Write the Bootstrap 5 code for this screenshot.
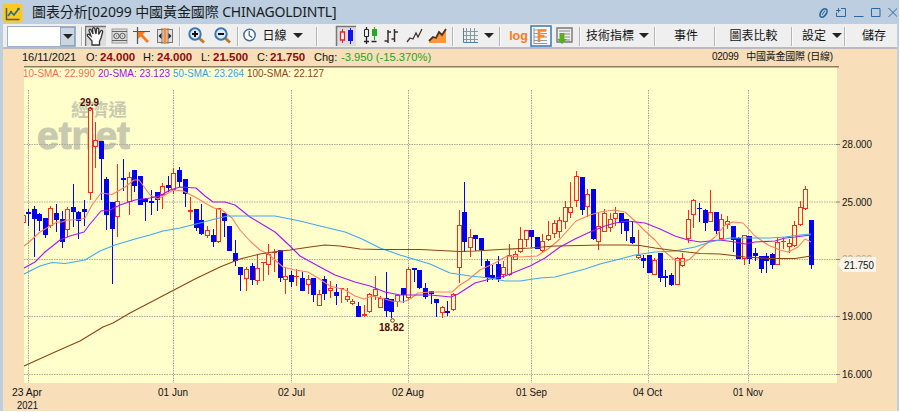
<!DOCTYPE html>
<html lang="zh-Hant">
<head>
<meta charset="utf-8">
<meta name="viewport" content="width=device-width, initial-scale=1">
<title>圖表分析</title>
<link href="https://cdn.jsdelivr.net/npm/bootstrap@5.3.0/dist/css/bootstrap.min.css" rel="stylesheet">
<style>
body{background:#fff;overflow:hidden;font-family:"Liberation Sans","Noto Sans CJK TC",sans-serif;color:#111;line-height:1}
.win{width:899px;height:411px;background:#bccedf;padding:0 2px 0 3px}
.titlebar{height:24px}
.titlebar h1{font:14px/28px "Noto Sans","Noto Sans CJK TC",sans-serif;letter-spacing:-.1px;color:#181c22;margin-left:9px}
.titlebar h1 span{letter-spacing:-.2px}
.tools{height:25px;background:#efefef;border-bottom:2px solid #b9bbbd;display:grid;padding-left:4px;
 grid-template-columns:72px 5px 23px 24px 21px 25px 6px 27px 24px 7px 17px 33px 14px 24px 34px 15px 26px 21px 26px 4px 30px 8px 14px 23px 22px 25px 5px 56px 12px 9px 54px 3px 75px 2px 42px 3px 14px 44px}
.tools>*{display:flex;align-items:center;justify-content:center;white-space:nowrap;font-size:12px;min-width:0}
.tools svg,.tools .tri{flex:none}
.tools>.vsep{width:2px;height:19px;margin:3px auto 0;background:#b5b5b5;border-right:1px solid #fafafa}
.combo{height:21px;width:69px;margin-top:1px;border:1px solid #9cb3c7;background:#fff}
.combo i{width:15px;background:#cad7e2;border:1px solid #8fa9c0}
.tri{width:0;height:0;border:5px solid transparent;border-top-color:#222;border-bottom:0}
.logtxt{font:bold 12.5px "Liberation Sans",sans-serif;color:#ff7a1a}
.info{height:17px;background:#f8dfb9;display:grid;font-size:11px;line-height:17px;padding-left:19px;white-space:nowrap;
 grid-template-columns:64px 14px 43px 14px 44px 12px 44px 13px 44px 27px 371px 1fr}
.info b{font-size:11.5px;color:#8d0b08}
.info .neg{color:#1fa51f;font-size:11.2px}
.info .sym{font-size:10px;line-height:15px;letter-spacing:-.25px}
svg{display:block}
.plot{background:#f8dfb9}
</style>
<script src="https://cdn.jsdelivr.net/npm/bootstrap@5.3.0/dist/js/bootstrap.bundle.min.js"></script>
</head>
<body>
<main class="win d-flex flex-column">
<header class="titlebar d-flex align-items-center justify-content-between">
 <div class="d-flex align-items-center">
  <svg width="20" height="20" viewBox="0 0 20 20" class="mt-1"><rect x="0" y="0" width="19.5" height="18.5" rx="3" fill="#ffc91f"/><path d="M3.5 4v11.500h13" fill="none" stroke="#46606c" stroke-width="1.500"/><path d="M5 12l3-4 3 3 4.500-6" fill="none" stroke="#28708a" stroke-width="1.700"/><circle cx="8" cy="8" r="1.200" fill="#28708a"/><circle cx="15.500" cy="5" r="1.300" fill="#28708a"/></svg>
  <h1 class="mb-0">圖表分析[02099 中國黃金國際 <span>CHINAGOLDINTL]</span></h1>
 </div>
 <svg width="82" height="16" viewBox="811 4 82 16" fill="none" stroke="#2e679b" stroke-width="1"><ellipse cx="819.500" cy="13" rx="2.800" ry="4.700" transform="rotate(35 819.500 13)" stroke-width="1.700"/><path d="M818 15l3-4.500M837 8.500h4.500v8h-9v-4M832 10.500h4.500M834.500 8v4.500M850 16.500h9.500M867.500 8.500h8.500v8h-8.500zM884.500 8l9 9M893.500 8l-9 9"/></svg>
</header>
<nav class="tools">
 <div class="justify-content-start"><div class="combo d-flex justify-content-end"><i class="d-flex align-items-center justify-content-center"><span class="tri"></span></i></div></div>
 <div class="vsep"></div>
 <div><svg width="22" height="22" viewBox="0 0 22 22"><path fill="#ddd" d="M0 1h21v20H0z"/><path d="M.5 21V1.500H21" fill="none" stroke="#777" stroke-width="1.500"/><path d="M7 20v-4L2.500 11c-.8-2 1.200-2.200 2-1.200L6 11 4 5.500c.2-1.800 1.800-1.500 2.300 0L8 9 7.500 4c.5-1.800 2-1.600 2.400 0L11 9l.6-5c.7-1.700 2.200-1 2.200.5L13.700 9.500l2-3.500c1-1.300 2.300-.5 1.900 1L16 13l-1.500 3.500V20z" fill="#fff" stroke="#333" stroke-width="1.300"/></svg></div>
 <div><svg width="17" height="18" viewBox="0 0 17 18" fill="none" stroke="#555"><rect x="1" y="2" width="15" height="14" fill="#ddd" stroke="#999"/><circle cx="5.500" cy="9" r="2.700"/><circle cx="11.500" cy="9" r="2.700"/><path d="M1 4.500h15M1 13.500h15M5 9h1M11 9h1" stroke-width=".9"/></svg></div>
 <div><svg width="18" height="18" viewBox="0 0 18 18"><path d="M0 4.500h17M4.500 0v17" stroke="#555" stroke-width="1.200"/><path d="M5 5h7l-2.300 2.400L16 14l-2 2-6.300-6.500L5 12z" fill="#ff7a1c"/></svg></div>
 <div><svg width="18" height="18" viewBox="0 0 18 18"><rect x="1.500" y="2.500" width="15" height="13" fill="#e2e2e2" stroke="#777"/><path d="M6 1v16M12 1v16" stroke="#777"/><path d="M7.500 1h3v16h-3z" fill="#ff8a32"/><path d="M5.500 6v6l-3-3zM12.500 6v6l3-3z" fill="#222"/></svg></div>
 <div class="vsep"></div>
 <div><svg width="19" height="19" viewBox="0 0 19 19"><path d="M12 12l5 4.500" stroke="#c47b23" stroke-width="3"/><circle cx="8" cy="8" r="5.700" fill="#dcebfa" stroke="#3977b3" stroke-width="2"/><path d="M5 8h6M8 5v6" stroke="#111" stroke-width="2"/></svg></div>
 <div><svg width="19" height="19" viewBox="0 0 19 19"><path d="M12 12l5 4.500" stroke="#c47b23" stroke-width="3"/><circle cx="8" cy="8" r="5.700" fill="#dcebfa" stroke="#3977b3" stroke-width="2"/><path d="M5 8h6" stroke="#111" stroke-width="2"/></svg></div>
 <div class="vsep"></div>
 <div><svg width="15" height="17" viewBox="0 0 15 17"><circle cx="7.500" cy="8" r="5.700" fill="#fff" stroke="#476b94" stroke-width="1.500"/><path d="M7.200 4v4.500l3 2" fill="none" stroke="#34587e" stroke-width="1.200"/></svg></div>
 <div>日線</div>
 <div><span class="tri"></span></div>
 <div class="vsep ms-auto"></div>
 <div><svg width="22" height="22" viewBox="0 0 22 22"><path fill="#ddd" d="M1 1h20v20H1z"/><path d="M1.500 21V1.500H21" fill="none" stroke="#777" stroke-width="1.500"/><path d="M7.500 4v14" stroke="#e8202a"/><path d="M5.500 7h4v8h-4z" fill="#fff" stroke="#e8202a" stroke-width="1.300"/><path d="M15.500 3v16" stroke="#11d"/><path d="M13 5h5v11h-5z" fill="#11e"/></svg></div>
 <div><svg width="18" height="19" viewBox="0 0 18 19"><path d="M4.500 1v17M2 15.500h5M9.500 15.500h5" stroke="#222" stroke-width="1.300"/><path d="M2.500 3.500h4v7h-4z" fill="#efefef" stroke="#222"/><path d="M12.500 1v13" stroke="#2a2"/><path d="M10 3h5v7h-5z" fill="#2a2"/></svg></div>
 <div><svg width="16" height="18" viewBox="0 0 16 18" fill="none" stroke="#3c302b" stroke-width="1.500"><path d="M5 3v13M1.500 14H5M5 5h3M11.500 2v13M8.500 12h3M11.500 5H15"/></svg></div>
 <div><svg width="18" height="18" viewBox="0 0 18 18"><path d="M1 15l3-4 3 1 3-6 2 4 4-8" fill="none" stroke="#43342e" stroke-width="1.300"/></svg></div>
 <div><svg width="20" height="18" viewBox="0 0 20 18"><path d="M1 15l4-5 3 2 3-7 3 4 4-7v14H1z" fill="#ff9738"/><path d="M1 14l4-4 3 1 3-6 3 3 4-6" fill="none" stroke="#51301e" stroke-width="1.800"/></svg></div>
 <div class="vsep"></div>
 <div><svg width="17" height="17" viewBox="0 0 17 17" fill="none"><path d="M4.500 1v14M8.500 1v14M12.500 1v14M1 4.500h15M1 8.500h15M1 12.500h15" stroke="#8798a5"/><path d="M1.500 1v14.500H16" stroke="#557e9e"/></svg></div>
 <div><span class="tri"></span></div>
 <div class="vsep"></div>
 <div class="logtxt">log</div>
 <div><svg width="22" height="22" viewBox="0 0 22 22"><path fill="#f8f8f8" stroke="#3b78b0" stroke-width="1.500" d="M1 1h20v20H1z"/><path d="M4 3v16M4 5h13M4 8.500h13M4 12h13M4 15.500h13M4 18.500h13" stroke="#8d9aa5"/><path d="M9 17V5.500h7M9 11h5.500" fill="none" stroke="#ff8429" stroke-width="2.500"/></svg></div>
 <div><svg width="19" height="19" viewBox="0 0 19 19"><path fill="#eee" stroke="#777" stroke-width="1.400" d="M2 2h15v14H2z"/><path d="M4 5h11M8 8h7M10 11h5M11 14h4" stroke="#888"/><path d="M4.500 7h5v6H12l-5 5-5-5h2.500z" fill="#58ad22"/></svg></div>
 <div class="vsep"></div>
 <div>技術指標</div><div><span class="tri"></span></div>
 <div class="vsep"></div><div>事件</div><div class="vsep"></div><div>圖表比較</div><div class="vsep"></div><div>設定</div><div><span class="tri"></span></div><div class="vsep ms-auto"></div><div>儲存</div>
</nav>
<section class="info"><span>16/11/2021</span><span>O:</span><b>24.000</b><span>H:</span><b>24.000</b><span>L:</span><b>21.500</b><span>C:</span><b>21.750</b><span>Chg:</span><span class="neg">-3.950 (-15.370%)</span><span class="sym">02099 &nbsp; 中國黃金國際 (日線)</span></section>
<svg class="plot" id="chart" width="894" height="345" viewBox="3 66 894 345" font-family="Liberation Sans, Noto Sans CJK TC, sans-serif"></svg>
</main>
<script>
// Each bar: up (1) or down (0), high, low, body top, body bottom
const bars = [
[0,209,226,212,214],[0,206,257,209,219],[0,213,231,214,221],[0,218,238,218,235],[1,206,228,208,226],[0,204,232,213,220],[0,211,248,219,242],[1,207,237,209,230],[0,184,227,207,212],[0,211,239,212,221],
[0,200,226,209,212],[1,107,200,108,193],[1,122,168,140,147],[0,141,200,141,159],[0,177,230,179,215],[0,202,284,202,229],[1,164,237,201,217],[0,159,191,178,180],[1,172,215,177,202],[0,170,192,170,186],
[0,176,205,176,205],[0,198,221,199,202],[0,190,215,201,203],[0,192,211,192,200],[1,183,209,186,195],[0,176,192,185,188],[1,168,194,173,190],[0,167,187,170,182],[0,179,207,179,194],[1,197,220,210,212],
[0,209,231,209,228],[0,204,235,220,234],[1,226,238,230,236],[0,229,247,235,242],[1,208,243,208,242],[0,213,237,213,221],[0,226,251,226,251],[0,240,266,253,261],[0,267,291,267,275],[1,267,291,269,279],
[0,263,285,266,280],[1,255,285,268,281],[1,262,281,262,262],[1,244,275,254,265],[1,249,272,252,252],[0,250,282,250,278],[1,267,294,276,280],[0,271,287,275,282],[1,269,286,276,276],[0,272,291,278,291],
[1,275,294,279,285],[0,278,302,278,295],[1,290,306,294,306],[0,276,300,279,294],[1,281,298,288,291],[0,284,305,292,296],[1,288,303,288,288],[1,288,302,296,300],[1,299,305,301,304],[0,302,317,306,317],
[1,305,317,314,316],[1,293,313,294,312],[1,276,300,289,296],[1,296,308,298,308],[0,272,317,298,311],[0,299,318,299,312],[1,295,307,295,302],[0,288,303,288,295],[1,267,299,269,298],[0,268,282,268,270],
[0,270,289,270,288],[0,283,299,288,297],[0,291,304,291,294],[0,299,317,299,303],[1,306,318,307,313],[0,301,316,311,313],[1,293,311,294,310],[1,210,283,225,268],[0,182,252,212,242],[1,229,257,237,248],
[0,235,251,235,239],[0,238,266,238,250],[0,259,282,261,278],[0,265,280,275,278],[0,256,282,264,279],[1,261,278,267,275],[1,244,276,255,275],[1,251,260,254,260],[1,227,253,239,252],[1,230,247,230,240],
[0,230,247,230,237],[0,237,249,237,249],[1,234,252,241,251],[1,221,241,235,240],[1,220,238,223,234],[1,217,238,220,232],[1,201,229,207,222],[1,182,218,207,213],[1,171,207,176,201],[0,177,215,177,210],
[1,189,217,194,207],[0,189,240,189,239],[1,212,250,226,242],[1,209,232,213,232],[1,213,232,219,228],[1,207,226,213,219],[0,213,234,213,223],[0,219,241,219,231],[0,221,244,237,243],[1,230,259,255,258],
[0,255,268,258,261],[0,255,273,255,273],[1,258,275,260,275],[0,253,282,253,278],[0,270,287,276,278],[0,273,286,275,285],[1,257,285,258,285],[1,253,267,258,266],[1,210,243,219,239],[1,199,228,200,215],
[0,203,222,208,209],[0,209,231,210,223],[1,190,222,212,222],[0,212,234,212,231],[1,214,240,219,239],[1,216,229,221,225],[0,226,252,226,240],[0,237,259,238,259],[1,235,265,235,259],[0,236,264,236,259],
[0,248,261,253,256],[0,256,273,256,269],[0,253,273,256,261],[0,253,269,254,265],[1,238,265,242,265],[1,237,249,241,241],[1,239,253,243,247],[1,221,247,225,246],[1,201,226,207,225],[1,186,210,189,209],[0,220,269,220,265]];
const averages = [
['#ff8163','24,246 28,243 40,232 57,222 62,222 67,220 80,219.5 85,218 92,205 101,193 112,194.5 125,187 134,180 139,180 145,188 150,195 158,199 165,195 173,190 183,191 195,197 205,203 214,208 222,210 232,218 240,230 250,241 260,250 268,254 275,260 283,267 295,270 308,272 318,278 330,286 345,290 355,296 364,299 372,296 385,299 392,301 403,302 410,299 418,293 430,292 452,292 460,285 468,280 480,270 495,263 507,256 520,257 537,256 548,249 560,239 568,230 576,221 590,215 600,212 614,210 625,212 635,221 645,231 655,240 665,252 675,260 684,262 690,259 700,249 715,237 725,225 733,222 743,223 755,236 768,245 780,250 788,252 798,247 805,239 811,242'],
['#a416f0','24,268 35,262 45,252 60,240 70,236 84,232 90,224 101,211 110,210 120,205 135,200 150,198 160,196 170,190 180,187 196,188 205,196 213,202 225,202 235,205 250,217 265,226 275,232 290,246 300,256 320,267 335,275 355,282 370,286 385,292 400,295 430,295 441,296 451,297 458,294 475,283 490,279 505,276 515,272 530,266 545,258 560,247 575,239 590,232 605,226 615,223 627,221 645,223 660,229 675,236 688,240 700,242 720,240 735,242 745,244 755,242 775,241 785,238 795,237 811,235'],
['#45a5f2','24,274 40,266 52,262.5 65,263.5 85,260 100,251 115,245 135,239 150,235 163,231 180,228 200,223 215,219 228,216 275,216 290,219 300,221 320,226 345,232 362,239 380,248 400,255 420,261 430,264 450,273 470,276 490,278 505,281 520,281 540,278 555,277 570,273 585,269 600,264 620,259 635,255 655,252 675,251 695,247 710,242 730,238 770,238 785,237 800,235 811,234'],
['#8b4513','24,366 55,352 80,341 103,327 113,323 130,313 174,290 195,279 220,267 240,259 260,254 280,251 290,250 310,247 325,245 340,246 360,249 380,249.5 420,249.5 440,250.5 460,251.5 475,251 500,249.5 530,248 555,246 580,245.5 600,245 625,245 640,245.5 655,248 670,250 700,253.5 720,254 745,257 770,258.5 795,258.5 811,256']];
const label = (x,y,s,w,fill='#111',extra='') => `<text x="${x}" y="${y}" font-size="10.5" fill="${fill}" textLength="${w}" lengthAdjust="spacingAndGlyphs" ${extra}>${s}</text>`;
let out = '<path fill="#ffffcc" d="M24 67h813v316H24z"/><path d="M24 66.700h815" stroke="#8c7b5f" stroke-width="1.600"/>';
out += label(71,116,'經濟通',56,'#c9c9b0','style="font-size:17px;font-weight:700"');
out += label(37,149,'etnet',93,'#c9c9b0','style="font-size:38px;font-weight:700" stroke="#c9c9b0" stroke-width="1"');
const months = [[28.5,'23 Apr',12,30],[173.5,'01 Jun',158,30],[291.5,'02 Jul',278,27],[408.5,'02 Aug',392,32],[531.5,'01 Sep',516,31],[648.5,'04 Oct',633,29],[748.5,'01 Nov',733,30]];
months.forEach(([x,t,tx,w]) => { out += `<path d="M${x} 90V383" stroke="#a3a39c" stroke-dasharray="1.500 1"/>` + label(tx,396,t,w); });
out += label(17,409,'2021',21);
[[144.5,'28.000'],[202,'25.000'],[259.5,'22.000'],[316.5,'19.000'],[374.5,'16.000']].forEach(([y,t]) => {
  out += `<path d="M24 ${y}H837" stroke="#aaaaa0" stroke-dasharray="1.500 1"/><path d="M836 ${y}h4" stroke="#888"/>` + label(842,y+3.5,t,30,t==='22.000'?'#b5aa9a':'#111');
});
out += '<path d="M24 215.500h1.500v7H24" fill="none" stroke="#ff2a1c"/>';
bars.forEach(([up,h,l,t,b],i) => {
  const x = Math.round(28 + i*5.592) + .5;
  const c = up ? '#ff2a1c' : '#0000f0';
  if (up) {
    out += `<rect x="${x-.5}" y="${h}" width="1" height="${l-h}" fill="${c}"/>`;
    out += b-t<1 ? `<rect x="${x-2.5}" y="${t}" width="5" height="1" fill="${c}"/>` : `<rect x="${x-2}" y="${t+.5}" width="4" height="${Math.max(b-t-1,1)}" fill="#ffffcc" stroke="${c}"/>`;
  } else out += `<rect x="${x-.5}" y="${h}" width="1" height="${l-h}" fill="${c}"/><rect x="${x-2.5}" y="${t}" width="5" height="${b-t}" fill="${c}"/>`;
});
averages.forEach(([c,p]) => out += `<polyline points="${p}" fill="none" stroke="${c}" stroke-width="1.100" stroke-linejoin="round"/>`);
out += label(23,76.5,'10-SMA: 22.990',72,'#ff6a50')+label(98,76.5,'20-SMA: 23.123',72,'#a010ec')+label(173,76.5,'50-SMA: 23.264',71,'#3c9cec')+label(247,76.5,'100-SMA: 22.127',77,'#8b4513');
out += label(80,106,'29.9',19,'#520800','font-weight="700"')+label(379,331,'18.82',25,'#520800','font-weight="700"');
out += '<g fill="none" stroke="#7a2b1c"><circle cx="90" cy="109" r="1.500"/><circle cx="392.500" cy="320.500" r="1.800"/></g>';
out += '<path d="M838 265l5-8h33v15h-33z" fill="#fff" fill-opacity=".72"/>'+label(844,269,'21.750',30);
document.getElementById('chart').innerHTML = out;
</script>
</body>
</html>
